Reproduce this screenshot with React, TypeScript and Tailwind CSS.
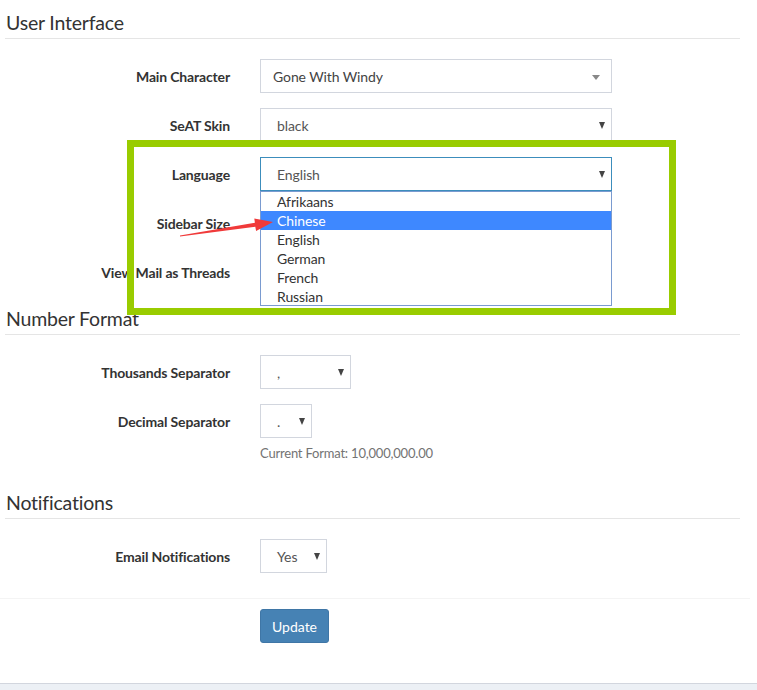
import React from "react";

function Caret({ light }: { light?: boolean }) {
  return light ? (
    <span className="absolute right-[11px] top-[15px] w-0 h-0 border-l-[4px] border-r-[4px] border-t-[5px] border-l-transparent border-r-transparent border-t-[#888]" />
  ) : (
    <span className="absolute right-[6px] top-[13px] w-0 h-0 border-l-[3.5px] border-r-[3.5px] border-t-[7px] border-l-transparent border-r-transparent border-t-[#444]" />
  );
}

function Select({
  value,
  width,
  pl = "pl-[16px]",
  light,
  focus,
  text = "text-[#555]",
}: {
  value: string;
  width: string;
  pl?: string;
  light?: boolean;
  focus?: boolean;
  text?: string;
}) {
  return (
    <div
      className={`relative h-[34px] ${width} border ${
        focus ? "border-[#3c8dbc]" : "border-[#d2d6de]"
      } bg-white flex items-center ${pl} text-[14px] tracking-[-0.1px] ${text}`}
    >
      <span>{value}</span>
      <Caret light={light} />
    </div>
  );
}

function Row({ label, children }: { label: string; children?: React.ReactNode }) {
  return (
    <div className="flex items-center h-[34px] mb-[15px]">
      <div className="w-[225px] text-right text-[14px] font-bold text-[#333] tracking-[-0.15px]">{label}</div>
      <div className="ml-[30px]">{children}</div>
    </div>
  );
}

function Legend({ title }: { title: string }) {
  return (
    <div className="h-[31px] border-b border-[#e5e5e5] mb-[20px] mr-[10px] flex items-center">
      <span className="pl-[1px] text-[19.5px] font-normal text-[#333] leading-none tracking-[-0.2px]">{title}</span>
    </div>
  );
}

export default function App() {
  const langs = ["Afrikaans", "Chinese", "English", "German", "French", "Russian"];
  return (
    <div className="relative w-[757px] h-[690px] bg-white overflow-hidden font-['Lato',sans-serif]">
      <div className="w-[750px] h-[683px] bg-white">
        <div className="pl-[5px] pt-[8px] pb-[10px]">
          <Legend title="User Interface" />
          <Row label="Main Character">
            <Select value="Gone With Windy" width="w-[352px]" pl="pl-[12px]" light text="text-[#444]" />
          </Row>
          <Row label="SeAT Skin">
            <Select value="black" width="w-[352px]" />
          </Row>
          <Row label="Language">
            <Select value="English" width="w-[352px]" focus />
          </Row>
          <Row label="Sidebar Size" />
          <Row label="View Mail as Threads" />

          <Legend title="Number Format" />
          <Row label="Thousands Separator">
            <Select value="," width="w-[91px]" />
          </Row>
          <div className="flex items-center h-[34px]">
            <div className="w-[225px] text-right text-[14px] font-bold text-[#333] tracking-[-0.15px]">Decimal Separator</div>
            <div className="ml-[30px]">
              <Select value="." width="w-[52px]" />
            </div>
          </div>
          <div className="ml-[255px] mt-[5px] mb-[25px] h-[20px] leading-[20px] text-[13px] tracking-[-0.2px] text-[#737373]">
            Current Format: 10,000,000.00
          </div>

          <Legend title="Notifications" />
          <Row label="Email Notifications">
            <Select value="Yes" width="w-[67px]" pl="pl-[16px]" />
          </Row>
        </div>
        <div className="border-t border-[#f4f4f4] pt-[10px] pl-[260px]">
          <button className="h-[34px] w-[69px] rounded-[3px] bg-[#4682b4] border border-[#3f76a6] text-white text-[14px]">
            Update
          </button>
        </div>
      </div>
      <div className="h-[7px] bg-[#ecf0f5] border-t border-[#d2d6de]" />

      {/* dropdown list */}
      <div className="absolute left-[260px] top-[191px] w-[352px] h-[115px] bg-white border border-[#7a9bd0] text-[14px] text-[#333] tracking-[-0.1px]">
        {langs.map((l) => (
          <div
            key={l}
            className={`h-[19px] leading-[19px] pl-[16px] ${
              l === "Chinese" ? "bg-[#3e88ff] text-white" : ""
            }`}
          >
            {l}
          </div>
        ))}
      </div>

      {/* green highlight */}
      <div className="absolute left-[127px] top-[140px] w-[549px] h-[175px] border-[7px] border-[#99cc00]" />

      {/* red arrow */}
      <svg className="absolute left-0 top-0" width="757" height="690" viewBox="0 0 757 690">
        <polygon
          points="180,236.5 255.3,226.7 256.1,231 273,222 254.3,218.6 254.9,222.7 180,235.5"
          fill="#f03a3a"
        />
      </svg>
    </div>
  );
}
